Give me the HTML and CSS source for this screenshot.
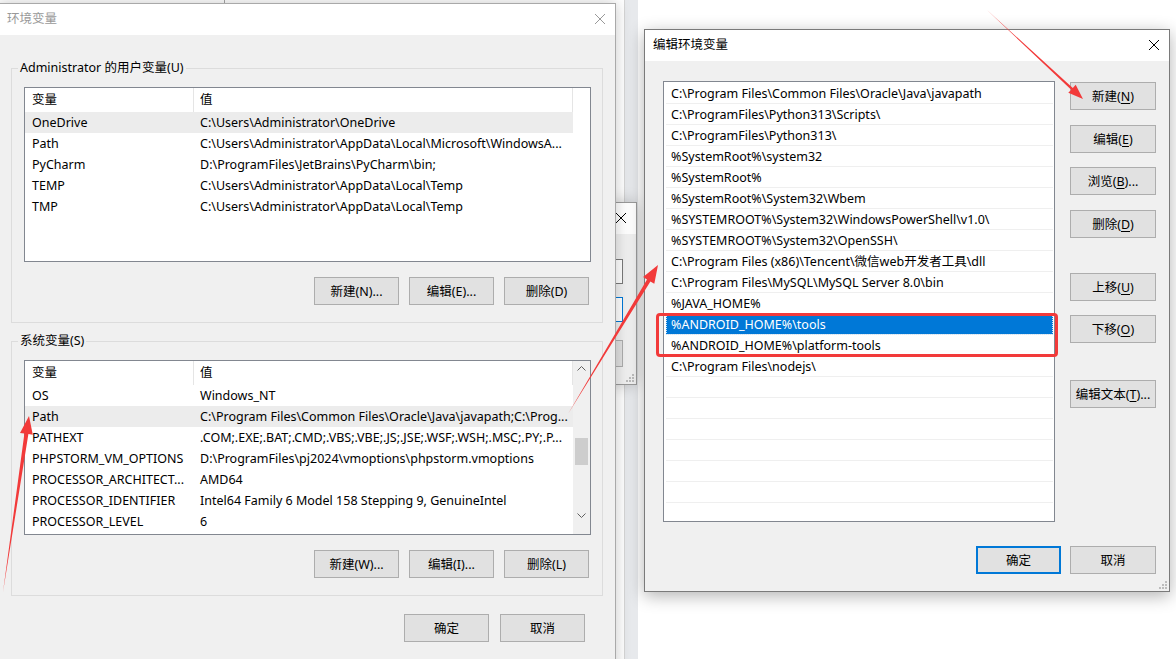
FILE: index.html
```html
<!DOCTYPE html>
<html lang="zh-CN">
<head>
  <meta charset="UTF-8">
  <meta name="viewport" content="width=device-width, initial-scale=1.0">
  <title>环境变量</title>
  <link rel="stylesheet" href="styles.css">
</head>
<body>
<div class="desktop">
  <div class="back-frame"></div>
  <div class="side-strip"></div>

  <!-- small dialog hidden behind -->
  <div class="win mini-win">
    <div class="titlebar">
      <span class="title"></span>
      <svg class="close" width="10" height="10" viewBox="0 0 10 10"><path d="M0 0L10 10M10 0L0 10" stroke="#000" stroke-width="1"/></svg>
    </div>
    <div class="mini-body">
      <div class="mini-field"></div>
      <div class="mini-field focus"></div>
      <div class="mini-btn"></div>
    </div>
    <svg class="grip" width="10" height="10" viewBox="0 0 10 10"><g fill="#bcbcbc"><rect x="8" y="2" width="2" height="2"/><rect x="5" y="5" width="2" height="2"/><rect x="8" y="5" width="2" height="2"/><rect x="2" y="8" width="2" height="2"/><rect x="5" y="8" width="2" height="2"/><rect x="8" y="8" width="2" height="2"/></g></svg>
  </div>

  <!-- 环境变量 -->
  <div class="win env-win">
    <div class="titlebar inactive">
      <span class="title">环境变量</span>
      <svg class="close" width="10" height="10" viewBox="0 0 10 10"><path d="M0 0L10 10M10 0L0 10" stroke="#999" stroke-width="1"/></svg>
    </div>
    <div class="env-body">
      <div class="group" id="userGroup">
        <span class="group-label">Administrator 的用户变量(U)</span>
        <div class="listview">
          <div class="lv-head">
            <span class="c1">变量</span><span class="c2">值</span>
          </div>
          <div class="lv-row hot"><span class="c1">OneDrive</span><span class="c2">C:\Users\Administrator\OneDrive</span></div>
          <div class="lv-row"><span class="c1">Path</span><span class="c2">C:\Users\Administrator\AppData\Local\Microsoft\WindowsA...</span></div>
          <div class="lv-row"><span class="c1">PyCharm</span><span class="c2">D:\ProgramFiles\JetBrains\PyCharm\bin;</span></div>
          <div class="lv-row"><span class="c1">TEMP</span><span class="c2">C:\Users\Administrator\AppData\Local\Temp</span></div>
          <div class="lv-row"><span class="c1">TMP</span><span class="c2">C:\Users\Administrator\AppData\Local\Temp</span></div>
        </div>
        <div class="btn-row">
          <button class="btn">新建(N)...</button>
          <button class="btn">编辑(E)...</button>
          <button class="btn">删除(D)</button>
        </div>
      </div>

      <div class="group" id="sysGroup">
        <span class="group-label">系统变量(S)</span>
        <div class="listview has-scroll">
          <div class="lv-main">
            <div class="lv-head">
              <span class="c1">变量</span><span class="c2">值</span>
            </div>
            <div class="lv-row"><span class="c1">OS</span><span class="c2">Windows_NT</span></div>
            <div class="lv-row hot"><span class="c1">Path</span><span class="c2">C:\Program Files\Common Files\Oracle\Java\javapath;C:\Prog...</span></div>
            <div class="lv-row"><span class="c1">PATHEXT</span><span class="c2">.COM;.EXE;.BAT;.CMD;.VBS;.VBE;.JS;.JSE;.WSF;.WSH;.MSC;.PY;.P...</span></div>
            <div class="lv-row"><span class="c1">PHPSTORM_VM_OPTIONS</span><span class="c2">D:\ProgramFiles\pj2024\vmoptions\phpstorm.vmoptions</span></div>
            <div class="lv-row"><span class="c1">PROCESSOR_ARCHITECT...</span><span class="c2">AMD64</span></div>
            <div class="lv-row"><span class="c1">PROCESSOR_IDENTIFIER</span><span class="c2">Intel64 Family 6 Model 158 Stepping 9, GenuineIntel</span></div>
            <div class="lv-row"><span class="c1">PROCESSOR_LEVEL</span><span class="c2">6</span></div>
          </div>
          <div class="scrollbar">
            <svg width="9" height="5" viewBox="0 0 9 5"><path d="M0.5 4.5L4.5 0.5L8.5 4.5" fill="none" stroke="#606060"/></svg>
            <div class="thumb"></div>
            <svg width="9" height="5" viewBox="0 0 9 5"><path d="M0.5 0.5L4.5 4.5L8.5 0.5" fill="none" stroke="#606060"/></svg>
          </div>
        </div>
        <div class="btn-row">
          <button class="btn">新建(W)...</button>
          <button class="btn">编辑(I)...</button>
          <button class="btn">删除(L)</button>
        </div>
      </div>

      <div class="footer env-footer">
        <button class="btn">确定</button>
        <button class="btn">取消</button>
      </div>
    </div>
    <svg class="grip" width="10" height="10" viewBox="0 0 10 10"><g fill="#bcbcbc"><rect x="8" y="2" width="2" height="2"/><rect x="5" y="5" width="2" height="2"/><rect x="8" y="5" width="2" height="2"/><rect x="2" y="8" width="2" height="2"/><rect x="5" y="8" width="2" height="2"/><rect x="8" y="8" width="2" height="2"/></g></svg>
  </div>

  <!-- 编辑环境变量 -->
  <div class="win edit-win">
    <div class="titlebar">
      <span class="title">编辑环境变量</span>
      <svg class="close" width="10" height="10" viewBox="0 0 10 10"><path d="M0 0L10 10M10 0L0 10" stroke="#000" stroke-width="1"/></svg>
    </div>
    <div class="edit-body">
      <div class="edit-main">
        <div class="path-list">
          <div class="path-row">C:\Program Files\Common Files\Oracle\Java\javapath</div>
          <div class="path-row">C:\ProgramFiles\Python313\Scripts\</div>
          <div class="path-row">C:\ProgramFiles\Python313\</div>
          <div class="path-row">%SystemRoot%\system32</div>
          <div class="path-row">%SystemRoot%</div>
          <div class="path-row">%SystemRoot%\System32\Wbem</div>
          <div class="path-row">%SYSTEMROOT%\System32\WindowsPowerShell\v1.0\</div>
          <div class="path-row">%SYSTEMROOT%\System32\OpenSSH\</div>
          <div class="path-row">C:\Program Files (x86)\Tencent\微信web开发者工具\dll</div>
          <div class="path-row">C:\Program Files\MySQL\MySQL Server 8.0\bin</div>
          <div class="path-row">%JAVA_HOME%</div>
          <div class="path-row selected">%ANDROID_HOME%\tools</div>
          <div class="path-row">%ANDROID_HOME%\platform-tools</div>
          <div class="path-row">C:\Program Files\nodejs\</div>
          <div class="path-row"></div>
          <div class="path-row"></div>
          <div class="path-row"></div>
          <div class="path-row"></div>
          <div class="path-row"></div>
          <div class="path-row"></div>
          <div class="path-row"></div>
        </div>
        <div class="side-btns">
          <button class="btn wide" id="newBtn">新建(<u>N</u>)</button>
          <button class="btn wide" id="editBtn">编辑(<u>E</u>)</button>
          <button class="btn wide" id="browseBtn">浏览(<u>B</u>)...</button>
          <button class="btn wide" id="delBtn">删除(<u>D</u>)</button>
          <button class="btn wide" id="upBtn">上移(<u>U</u>)</button>
          <button class="btn wide" id="downBtn">下移(<u>O</u>)</button>
          <button class="btn wide" id="textBtn">编辑文本(<u>T</u>)...</button>
        </div>
      </div>
      <div class="footer edit-footer">
        <button class="btn default">确定</button>
        <button class="btn wide">取消</button>
      </div>
    </div>
    <svg class="grip" width="10" height="10" viewBox="0 0 10 10"><g fill="#bcbcbc"><rect x="8" y="2" width="2" height="2"/><rect x="5" y="5" width="2" height="2"/><rect x="8" y="5" width="2" height="2"/><rect x="2" y="8" width="2" height="2"/><rect x="5" y="8" width="2" height="2"/><rect x="8" y="8" width="2" height="2"/></g></svg>
  </div>

  <!-- annotations -->
  <div class="mark-box"></div>
  <svg class="arrows" width="1176" height="659" viewBox="0 0 1176 659">
    <g fill="#f23a3a">
      <polygon points="987,10 1071.2,89.7 1068.3,92.8 1083,99 1075.7,84.8 1072.8,87.9"/>
      <polygon points="568,414 650.4,281.4 654.3,283.8 658,265 643.1,277 647,279.4"/>
      <polygon points="3,592 28.4,434.1 32.8,434.7 29,416 20,432.9 24.4,433.5"/>
    </g>
  </svg>
</div>
</body>
</html>
```

FILE: styles.css
```css
body {
  margin: 0;
  background-color: #fff;
  font-family: "Noto Sans", "Noto Sans CJK SC", sans-serif;
  font-size: 12.5px;
  color: #000;
  overflow: hidden;
}

.desktop {
  position: relative;
  width: 1176px;
  height: 659px;
  overflow: hidden;
}

.back-frame {
  position: absolute;
  left: -20px;
  top: -20px;
  width: 243px;
  height: 22px;
  border: 1px solid #a6a6a6;
  background-color: #fff;
}

.side-strip {
  position: absolute;
  left: 624px;
  top: 0;
  width: 13px;
  height: 659px;
  background-color: #e7e9ec;
  border-left: 1px solid #d6d6d6;
}

/* windows */
.win {
  position: absolute;
  box-sizing: border-box;
  display: flex;
  flex-direction: column;
  background-color: #f0f0f0;
  border: 1px solid #a9a9a9;
  box-shadow: 0 0 14px rgba(0, 0, 0, 0.22);
}

.titlebar {
  height: 31px;
  box-sizing: border-box;
  flex-shrink: 0;
  display: flex;
  align-items: center;
  justify-content: space-between;
  padding: 0 10px 4px 8px;
  background-color: #fff;
}

.titlebar .title {
  font-size: 12.5px;
  color: #000;
}

.titlebar .close {
  margin-top: 2px;
}

.titlebar.inactive .title {
  color: #999;
}

.grip {
  position: absolute;
  right: 2px;
  bottom: 2px;
}

.btn {
  box-sizing: border-box;
  width: 85px;
  height: 28px;
  padding: 0 0 1px;
  font-family: inherit;
  font-size: 12.5px;
  color: #000;
  background-color: #e1e1e1;
  border: 1px solid #adadad;
  border-radius: 0;
}

.btn u {
  text-decoration-thickness: 1px;
  text-underline-offset: 2px;
}

.btn.wide {
  width: 86px;
}

/* small dialog behind */
.mini-win {
  left: 420px;
  top: 202px;
  width: 217px;
  height: 183px;
  border-color: #9a9a9a;
}

.mini-body {
  display: flex;
  flex-direction: column;
  align-items: flex-end;
  padding-right: 13px;
}

.mini-field {
  width: 150px;
  height: 25px;
  margin-top: 25px;
  box-sizing: border-box;
  border: 1px solid #7a7a7a;
  background-color: #fff;
}

.mini-field.focus {
  margin-top: 13px;
  border-color: #0078d7;
}

.mini-btn {
  width: 150px;
  height: 27px;
  margin-top: 18px;
  box-sizing: border-box;
  background-color: #e1e1e1;
  border: 1px solid #adadad;
}

/* 环境变量 */
.env-win {
  left: -2px;
  top: 3px;
  width: 618px;
  height: 680px;
}

.env-body {
  padding: 0 12px;
}

.group {
  border: 1px solid #dcdcdc;
  padding: 18px 12px 17px;
}

#userGroup {
  margin-top: 33px;
}

#sysGroup {
  margin-top: 18px;
}

.group-label {
  display: block;
  width: max-content;
  margin: -27px 0 11px -6px;
  padding: 0 2px;
  line-height: 16px;
  background-color: #f0f0f0;
}

.listview {
  box-sizing: border-box;
  width: 567px;
  height: 175px;
  border: 1px solid #828790;
  background-color: #fff;
  overflow: hidden;
}

.listview.has-scroll {
  display: flex;
}

.lv-main {
  flex: 1;
}

.lv-head {
  display: flex;
  width: 548px;
  height: 24px;
  align-items: center;
}

.lv-head span {
  height: 100%;
  line-height: 23px;
  border-right: 1px solid #e5e5e5;
  box-sizing: border-box;
}

.lv-row {
  display: flex;
  width: 548px;
  height: 21px;
  align-items: center;
}

.lv-row.hot {
  background-color: #ececec;
}

.c1 {
  width: 169px;
  flex-shrink: 0;
  padding-left: 7px;
  box-sizing: border-box;
  white-space: nowrap;
  overflow: hidden;
}

.c2 {
  flex: 1;
  padding-left: 6px;
  white-space: nowrap;
  overflow: hidden;
}

.scrollbar {
  width: 17px;
  flex-shrink: 0;
  display: flex;
  flex-direction: column;
  align-items: center;
  background-color: #f0f0f0;
  padding: 5px 0;
  box-sizing: border-box;
}

.scrollbar .thumb {
  width: 13px;
  height: 27px;
  margin: 67px 0 48px;
  background-color: #cdcdcd;
}

.btn-row {
  display: flex;
  justify-content: flex-end;
  gap: 10px;
  margin-top: 15px;
  padding-right: 1px;
}

.footer {
  display: flex;
  justify-content: flex-end;
}

.env-footer {
  margin-top: 18px;
  gap: 11px;
  padding-right: 18px;
}

/* 编辑环境变量 */
.edit-win {
  left: 644px;
  top: 29px;
  width: 526px;
  height: 563px;
  border-color: #7a7a7a;
  box-shadow: 0 4px 16px rgba(0, 0, 0, 0.3);
}

.edit-body {
  padding: 20px 13px 0 18px;
}

.edit-main {
  display: flex;
  gap: 15px;
}

.path-list {
  box-sizing: border-box;
  width: 392px;
  height: 441px;
  padding-top: 1px;
  border: 1px solid #828790;
  background-color: #fff;
  overflow: hidden;
}

.path-row {
  box-sizing: border-box;
  height: 21px;
  margin: 0 1px 0 2px;
  padding-left: 5px;
  line-height: 22px;
  border-bottom: 1px solid #efefef;
  white-space: nowrap;
}

.path-row.selected {
  background-color: #0078d7;
  color: #fff;
  outline: 1px dotted #cfe4f7;
  outline-offset: -1px;
}

.side-btns {
  display: flex;
  flex-direction: column;
}

#newBtn { margin-top: 1px; }
#editBtn { margin-top: 15px; }
#browseBtn { margin-top: 14px; }
#delBtn { margin-top: 15px; }
#upBtn { margin-top: 35px; }
#downBtn { margin-top: 14px; }
#textBtn { margin-top: 37px; }

.edit-footer {
  margin-top: 24px;
  gap: 9px;
}

.btn.default {
  border: 2px solid #0078d7;
}

/* annotations */
.mark-box {
  position: absolute;
  left: 656px;
  top: 313px;
  width: 396px;
  height: 38px;
  border: 3px solid #f23a3a;
  border-radius: 4px;
}

.arrows {
  position: absolute;
  left: 0;
  top: 0;
  pointer-events: none;
}
```
